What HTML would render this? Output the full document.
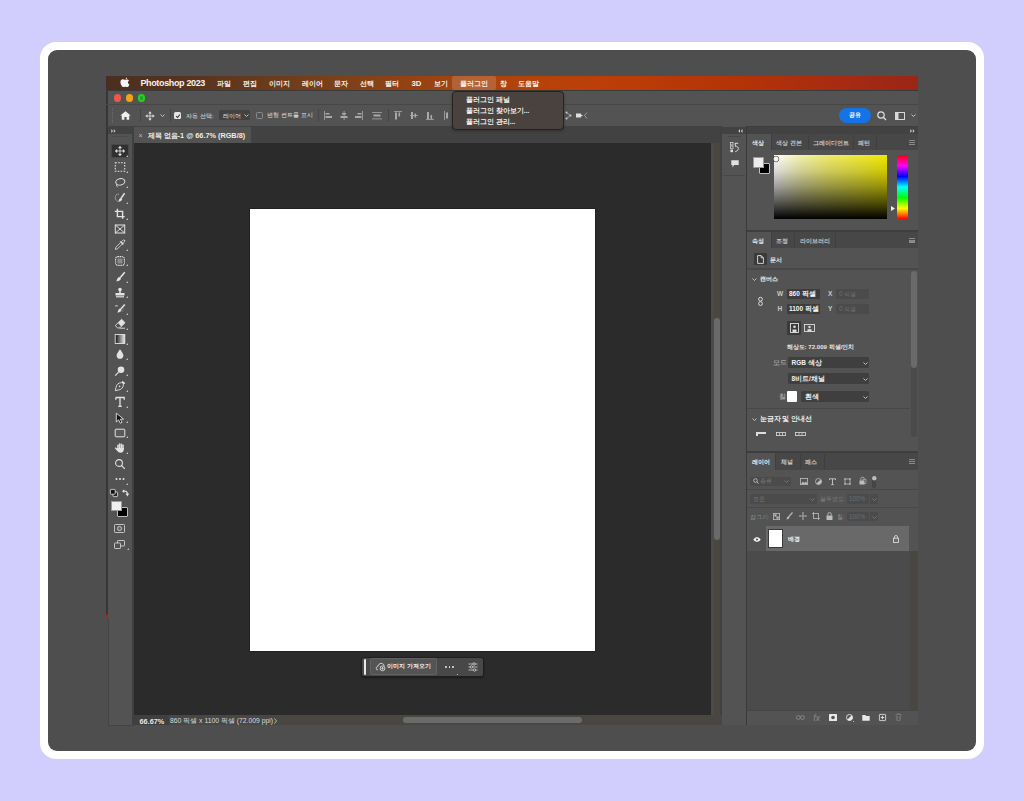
<!DOCTYPE html>
<html><head><meta charset="utf-8">
<style>
*{margin:0;padding:0;box-sizing:border-box}
html,body{width:1024px;height:801px;overflow:hidden;background:#d1cdfc;font-family:"Liberation Sans",sans-serif;color:#e8e8e8}
.a{position:absolute}
.t{position:absolute;white-space:nowrap;line-height:1}
svg{position:absolute;overflow:visible}
</style></head><body>
<div class="a" style="left:40px;top:42px;width:944px;height:717px;background:#fff;border-radius:16px"></div>
<div class="a" style="left:48px;top:50px;width:928px;height:701px;background:#4e4e4e;border-radius:9px"></div>
<div class="a" style="left:106px;top:76px;width:812px;height:649px;background:#535353;"></div>
<div class="a" style="left:106px;top:76px;width:812px;height:14px;background:linear-gradient(to right,#4a2f1f 0%,#56341f 10%,#7a4019 28%,#a8440f 45%,#b84208 55%,#bc3e06 62%,#b23208 80%,#a42a12 92%,#9a2616 100%);"></div>
<div class="a" style="left:106px;top:76px;width:2px;height:14px;background:#4a2836;"></div>
<svg style="left:119.8px;top:77.4px" width="10" height="11" viewBox="0 0 10 11"><g transform="scale(1.12)"><path d="M6.3 0.3c0.1 0.9-0.3 1.7-1.2 2.1-0.1-0.8 0.4-1.7 1.2-2.1z M4.6 2.6c0.6 0 1.1-0.4 1.8-0.4 0.6 0 1.3 0.3 1.7 0.9-1.5 0.8-1.3 2.9 0.3 3.5-0.3 0.9-0.9 2.3-1.8 2.4-0.7 0.1-0.9-0.4-1.8-0.4-0.9 0-1.1 0.4-1.8 0.4C2 9 0.4 6.3 0.4 4.6c0-1.6 1-2.5 2.1-2.5 0.8 0 1.4 0.5 2.1 0.5z" fill="#f4f4f4"/></g></svg>
<div class="t" style="left:140.4px;top:79.24px;font-size:9px;color:#f6f0ec;font-weight:bold;letter-spacing:-0.35px">Photoshop 2023</div>
<div class="a" style="left:452.3px;top:76.3px;width:43.3px;height:13.7px;background:rgba(255,255,255,0.16);border-radius:2px"></div>
<div class="t" style="left:216.6px;top:80.22px;font-size:7px;color:#f8f2ee;font-weight:bold;">파일</div>
<div class="t" style="left:243px;top:80.22px;font-size:7px;color:#f8f2ee;font-weight:bold;">편집</div>
<div class="t" style="left:268.75px;top:80.22px;font-size:7px;color:#f8f2ee;font-weight:bold;">이미지</div>
<div class="t" style="left:301.6px;top:80.22px;font-size:7px;color:#f8f2ee;font-weight:bold;">레이어</div>
<div class="t" style="left:333.8px;top:80.22px;font-size:7px;color:#f8f2ee;font-weight:bold;">문자</div>
<div class="t" style="left:359.8px;top:80.22px;font-size:7px;color:#f8f2ee;font-weight:bold;">선택</div>
<div class="t" style="left:385px;top:80.22px;font-size:7px;color:#f8f2ee;font-weight:bold;">필터</div>
<div class="t" style="left:434.3px;top:80.22px;font-size:7px;color:#f8f2ee;font-weight:bold;">보기</div>
<div class="t" style="left:460px;top:80.22px;font-size:7px;color:#f8f2ee;font-weight:bold;">플러그인</div>
<div class="t" style="left:499.5px;top:80.22px;font-size:7px;color:#f8f2ee;font-weight:bold;">창</div>
<div class="t" style="left:518.3px;top:80.22px;font-size:7px;color:#f8f2ee;font-weight:bold;">도움말</div>
<div class="t" style="left:411.4px;top:79.87px;font-size:7.8px;color:#f8f2ee;font-weight:bold;">3D</div>
<div class="a" style="left:106px;top:90px;width:812px;height:1px;background:#3a3a3a;"></div>
<div class="a" style="left:106px;top:91px;width:2px;height:525px;background:#363636;"></div>
<div class="a" style="left:106.2px;top:613.8px;width:2.2px;height:4.2px;background:#b02414;border-radius:50%"></div>
<div class="a" style="left:106px;top:618px;width:2px;height:107px;background:#4e4e4e;"></div>
<div class="a" style="left:106px;top:104px;width:812px;height:1px;background:#4a4742;"></div>
<div class="a" style="left:113.75px;top:94.0px;width:7.5px;height:7.5px;background:#f0574c;border-radius:50%"></div>
<div class="a" style="left:125.75px;top:94.0px;width:7.5px;height:7.5px;background:#f5a316;border-radius:50%"></div>
<div class="a" style="left:137.75px;top:94.0px;width:7.5px;height:7.5px;background:#20d420;border-radius:50%"></div>
<div class="a" style="left:139.6px;top:95.85px;width:3.8px;height:3.8px;background:#2c9a2c;border-radius:50%"></div>
<div class="a" style="left:112px;top:108px;width:1px;height:1px;background:#6e6e6e;"></div>
<div class="a" style="left:112px;top:110px;width:1px;height:1px;background:#6e6e6e;"></div>
<div class="a" style="left:112px;top:112px;width:1px;height:1px;background:#6e6e6e;"></div>
<div class="a" style="left:112px;top:114px;width:1px;height:1px;background:#6e6e6e;"></div>
<div class="a" style="left:112px;top:116px;width:1px;height:1px;background:#6e6e6e;"></div>
<div class="a" style="left:112px;top:118px;width:1px;height:1px;background:#6e6e6e;"></div>
<div class="a" style="left:112px;top:120px;width:1px;height:1px;background:#6e6e6e;"></div>
<div class="a" style="left:112px;top:122px;width:1px;height:1px;background:#6e6e6e;"></div>
<svg style="left:120px;top:111px" width="11" height="9" viewBox="0 0 11 9"><path d="M5.5 0.3L0.3 4.6h1.5V8.7h2.6V6h2.2v2.7h2.6V4.6h1.5z" fill="#eeeeee"/></svg>
<div class="a" style="left:140.3px;top:108.5px;width:1.0px;height:13.5px;background:#454545;"></div>
<div class="a" style="left:169.6px;top:108.5px;width:1.0px;height:13.5px;background:#454545;"></div>
<div class="a" style="left:317.6px;top:108.5px;width:1.0px;height:13.5px;background:#454545;"></div>
<div class="a" style="left:387.6px;top:108.5px;width:1.0px;height:13.5px;background:#454545;"></div>
<svg style="left:144.5px;top:110.5px" width="10" height="10" viewBox="0 0 10 10"><path d="M5 2v6M2 5h6" stroke="#e8e8e8" stroke-width="0.8"/><path d="M5 0.6L3.7 2.3h2.6zM5 9.4L3.7 7.7h2.6zM0.6 5L2.3 3.7v2.6zM9.4 5L7.7 3.7v2.6z" fill="#e8e8e8" stroke="#e8e8e8" stroke-width="0.4" stroke-linejoin="round"/></svg>
<svg style="left:160px;top:114px" width="5" height="3" viewBox="0 0 5 3"><path d="M0.5 0.5L2.5 2.5L4.5 0.5" stroke="#cfcfcf" stroke-width="0.9" fill="none"/></svg>
<div class="a" style="left:174.4px;top:112px;width:6.9px;height:6.8px;background:#e4e4e4;border-radius:1.5px"></div>
<svg style="left:175px;top:112.5px" width="6" height="6" viewBox="0 0 6 6"><path d="M1.2 3.1L2.6 4.5L4.9 1.5" stroke="#333" stroke-width="1.1" fill="none"/></svg>
<div class="t" style="left:186.4px;top:112.86px;font-size:6px;color:#e0e0e0;font-weight:500;">자동 선택:</div>
<div class="a" style="left:219.4px;top:110px;width:30.6px;height:10.4px;background:#424242;border-radius:1.5px"></div>
<div class="t" style="left:222.5px;top:112.86px;font-size:6px;color:#e0e0e0;font-weight:500;">레이어</div>
<svg style="left:244px;top:114px" width="5" height="3" viewBox="0 0 5 3"><path d="M0.5 0.5L2.5 2.5L4.5 0.5" stroke="#cfcfcf" stroke-width="0.9" fill="none"/></svg>
<div class="a" style="left:255.7px;top:112px;width:7.2px;height:7px;background:transparent;border:1px solid #8a8a8a;border-radius:1.5px"></div>
<div class="t" style="left:267.4px;top:112.9px;font-size:5.9px;color:#e0e0e0;font-weight:500;">변형 컨트롤 표시</div>
<svg style="left:323.9px;top:111px" width="10" height="9" viewBox="0 0 10 9"><rect x="0" y="0" width="0.8" height="9" fill="#a9a9a9"/><rect x="1.5" y="2" width="4" height="1.5" fill="#a9a9a9"/><rect x="1.5" y="5" width="6.5" height="2" fill="#a9a9a9"/></svg>
<svg style="left:340px;top:111px" width="10" height="9" viewBox="0 0 10 9"><rect x="3.7" y="0" width="0.8" height="9" fill="#a9a9a9"/><rect x="2" y="2" width="4" height="1.6" fill="#a9a9a9"/><rect x="0.5" y="5" width="7" height="2" fill="#a9a9a9"/></svg>
<svg style="left:354.7px;top:111px" width="10" height="9" viewBox="0 0 10 9"><rect x="7.2" y="0" width="0.8" height="9" fill="#a9a9a9"/><rect x="2.5" y="2" width="4" height="1.5" fill="#a9a9a9"/><rect x="0" y="5" width="6.5" height="2" fill="#a9a9a9"/></svg>
<svg style="left:372.3px;top:111px" width="10" height="9" viewBox="0 0 10 9"><rect x="0" y="1" width="10" height="0.8" fill="#a9a9a9"/><rect x="1.5" y="3.5" width="7" height="2" fill="#a9a9a9"/><rect x="0" y="7.5" width="10" height="0.8" fill="#a9a9a9"/></svg>
<svg style="left:394.2px;top:111px" width="10" height="9" viewBox="0 0 10 9"><rect x="0" y="0" width="8" height="0.8" fill="#a9a9a9"/><rect x="1" y="1.5" width="2" height="7" fill="#a9a9a9"/><rect x="4.5" y="1.5" width="1.6" height="4" fill="#a9a9a9"/></svg>
<svg style="left:410.3px;top:111px" width="10" height="9" viewBox="0 0 10 9"><rect x="0" y="4" width="8" height="0.8" fill="#a9a9a9"/><rect x="1" y="1" width="2" height="7" fill="#a9a9a9"/><rect x="4.5" y="2.5" width="1.6" height="4" fill="#a9a9a9"/></svg>
<svg style="left:425.7px;top:111px" width="10" height="9" viewBox="0 0 10 9"><rect x="0" y="8.2" width="8" height="0.8" fill="#a9a9a9"/><rect x="1" y="1" width="2" height="7" fill="#a9a9a9"/><rect x="4.5" y="4" width="1.6" height="4" fill="#a9a9a9"/></svg>
<svg style="left:444px;top:111px" width="10" height="9" viewBox="0 0 10 9"><rect x="0" y="0" width="0.8" height="9" fill="#a9a9a9"/><rect x="2" y="1.5" width="2" height="6" fill="#a9a9a9"/></svg>
<svg style="left:565px;top:111px" width="7" height="9" viewBox="0 0 7 9"><g fill="#cfcfcf"><circle cx="1.5" cy="1.5" r="1"/><circle cx="5.5" cy="4.5" r="1"/><circle cx="1.5" cy="7.5" r="1"/></g><path d="M1.5 1.5L5.5 4.5L1.5 7.5" stroke="#cfcfcf" stroke-width="0.6" fill="none"/></svg>
<svg style="left:575.5px;top:112px" width="12" height="7" viewBox="0 0 12 7"><rect x="0" y="1.5" width="5" height="4" fill="#dedede"/><path d="M5 2.5L7 3.5L5 4.5z" fill="#dedede"/><path d="M11 0.5L8.5 3.5L11 6.5" stroke="#bbb" stroke-width="0.7" fill="none"/></svg>
<div class="a" style="left:839.1px;top:107.9px;width:31.5px;height:14.8px;background:#1473e6;border-radius:8px"></div>
<div class="t" style="left:849.2px;top:112.84px;font-size:5.6px;color:#ffffff;font-weight:bold;">공유</div>
<svg style="left:877px;top:111px" width="10" height="10" viewBox="0 0 10 10"><circle cx="4" cy="4" r="3.2" stroke="#e0e0e0" stroke-width="1.2" fill="none"/><path d="M6.3 6.3L9 9" stroke="#e0e0e0" stroke-width="1.3"/></svg>
<svg style="left:895px;top:112px" width="10" height="8" viewBox="0 0 10 8"><rect x="0.5" y="0.5" width="9" height="7" stroke="#d8d8d8" stroke-width="1" fill="none"/><rect x="1" y="1" width="2.5" height="6" fill="#d8d8d8"/></svg>
<svg style="left:911px;top:114px" width="5" height="3" viewBox="0 0 5 3"><path d="M0.5 0.5L2.5 2.5L4.5 0.5" stroke="#cfcfcf" stroke-width="0.9" fill="none"/></svg>
<div class="a" style="left:106px;top:126px;width:812px;height:1px;background:#424242;"></div>
<div class="a" style="left:134px;top:126px;width:588px;height:17.5px;background:#424242;"></div>
<div class="a" style="left:134px;top:127px;width:117px;height:16px;background:#535353;"></div>
<div class="t" style="left:138.5px;top:132.22px;font-size:7px;color:#bdbdbd;font-weight:normal;">×</div>
<div class="t" style="left:147.6px;top:132.09px;font-size:7.3px;color:#ececec;font-weight:bold;">제목 없음-1 @ 66.7% (RGB/8)</div>
<div class="a" style="left:108px;top:127px;width:24px;height:598px;background:#535353;"></div>
<div class="a" style="left:108px;top:127px;width:24px;height:7px;background:#424242;"></div>
<svg style="left:110.5px;top:128.5px" width="5" height="4" viewBox="0 0 5 4"><path d="M0.3 0L2 2 0.3 4zM2.8 0L4.5 2 2.8 4z" fill="#c8c8c8"/></svg>
<div class="a" style="left:113px;top:136px;width:14px;height:1px;background:#4a4a4a;"></div>
<div class="a" style="left:132px;top:127px;width:2px;height:598px;background:#404040;"></div>
<div class="a" style="left:108px;top:618px;width:0.8px;height:107px;background:#454545;"></div>
<div class="a" style="left:108px;top:725px;width:26px;height:1px;background:#434343;"></div>
<div class="a" style="left:111.2px;top:144.3px;width:18.0px;height:13.7px;background:#303030;border-radius:2px;border:0.6px solid #474747"></div>
<svg style="left:114px;top:145.2px" width="12" height="12" viewBox="0 0 12 12"><path d="M6 2.5v7M2.5 6h7" stroke="#e2e2e2" stroke-width="0.8"/><path d="M6 1.1L4.5 3h3zM6 10.9L4.5 9h3zM1.1 6L3 4.5v3zM10.9 6L9 4.5v3z" fill="#e2e2e2" stroke="#e2e2e2" stroke-width="0.5" stroke-linejoin="round"/></svg>
<svg style="left:126px;top:155.0px" width="2" height="2" viewBox="0 0 2 2"><path d="M2 0V2H0z" fill="#bdbdbd"/></svg>
<svg style="left:114px;top:160.9px" width="12" height="12" viewBox="0 0 12 12"><rect x="1.3" y="1.8" width="9.4" height="8.4" stroke="#e2e2e2" stroke-width="1.1" stroke-dasharray="1.6 1.3" fill="none"/></svg>
<svg style="left:126px;top:170.7px" width="2" height="2" viewBox="0 0 2 2"><path d="M2 0V2H0z" fill="#bdbdbd"/></svg>
<svg style="left:114px;top:176.5px" width="12" height="12" viewBox="0 0 12 12"><ellipse cx="6.3" cy="4.8" rx="4.6" ry="3.2" transform="rotate(-12 6.3 4.8)" stroke="#e2e2e2" stroke-width="1" fill="none"/><path d="M2.8 7.2c-0.8 1.3 0.2 2.3 0.8 2.8" stroke="#e2e2e2" stroke-width="0.9" fill="none"/></svg>
<svg style="left:126px;top:186.3px" width="2" height="2" viewBox="0 0 2 2"><path d="M2 0V2H0z" fill="#bdbdbd"/></svg>
<svg style="left:114px;top:192px" width="12" height="12" viewBox="0 0 12 12"><path d="M4.8 2.2C2.5 1.8 1.2 3.5 1.3 5.7c0.1 2 1.4 3.7 3.1 4" stroke="#e2e2e2" stroke-width="0.8" stroke-dasharray="1 0.8" fill="none"/><path d="M10.6 1.3L7.2 6.1" stroke="#e2e2e2" stroke-width="1.5"/><path d="M7 5.8c-1.6 0.6-2.2 2-2.6 4 1.9-0.3 3.4-1 3.9-2.8z" fill="#e2e2e2"/></svg>
<svg style="left:126px;top:201.8px" width="2" height="2" viewBox="0 0 2 2"><path d="M2 0V2H0z" fill="#bdbdbd"/></svg>
<svg style="left:114px;top:207.75px" width="12" height="12" viewBox="0 0 12 12"><path d="M3.4 0.8v7.8h7.2M0.8 3.4h7.8v7.4" stroke="#e2e2e2" stroke-width="1.4" fill="none"/></svg>
<svg style="left:126px;top:217.55px" width="2" height="2" viewBox="0 0 2 2"><path d="M2 0V2H0z" fill="#bdbdbd"/></svg>
<svg style="left:114px;top:223.4px" width="12" height="12" viewBox="0 0 12 12"><rect x="1.3" y="2" width="9.4" height="8" stroke="#e2e2e2" stroke-width="1" fill="none"/><path d="M1.3 2L10.7 10M10.7 2L1.3 10" stroke="#e2e2e2" stroke-width="0.9"/></svg>
<svg style="left:114px;top:239px" width="12" height="12" viewBox="0 0 12 12"><path d="M10.6 1.4c-0.6-0.6-1.5-0.5-2 0.1L7.4 2.7 6.8 2.1 5.9 3l0.6 0.6-4.6 4.6-0.6 2.2 2.2-0.6 4.6-4.6 0.6 0.6 0.9-0.9-0.6-0.6 1.2-1.2c0.6-0.5 0.7-1.4 0.4-2.1z" stroke="#e2e2e2" stroke-width="0.8" fill="none"/><path d="M6.5 3.6L8.4 5.5 9.5 4.4 7.6 2.5z" fill="#e2e2e2"/></svg>
<svg style="left:126px;top:248.8px" width="2" height="2" viewBox="0 0 2 2"><path d="M2 0V2H0z" fill="#bdbdbd"/></svg>
<svg style="left:114px;top:254.6px" width="12" height="12" viewBox="0 0 12 12"><rect x="1.6" y="1.6" width="8.8" height="8.8" rx="2.4" stroke="#e2e2e2" stroke-width="1.1" stroke-dasharray="1.2 0.6" fill="none"/><rect x="3.5" y="3.5" width="5" height="5" fill="#8a8a8a"/></svg>
<svg style="left:126px;top:264.4px" width="2" height="2" viewBox="0 0 2 2"><path d="M2 0V2H0z" fill="#bdbdbd"/></svg>
<svg style="left:114px;top:270.9px" width="12" height="12" viewBox="0 0 12 12"><path d="M10.8 1.2L6.3 6.4" stroke="#e2e2e2" stroke-width="1.6"/><path d="M5.8 6C4 6.2 3 7.4 2.4 10.6 5 10 6.8 9 7 7.2z" fill="#e2e2e2"/></svg>
<svg style="left:126px;top:280.7px" width="2" height="2" viewBox="0 0 2 2"><path d="M2 0V2H0z" fill="#bdbdbd"/></svg>
<svg style="left:114px;top:286.5px" width="12" height="12" viewBox="0 0 12 12"><circle cx="6" cy="2.6" r="1.8" fill="#e2e2e2"/><path d="M5.2 3.8h1.6v2.2h3.7v2.4H1.5V6h3.7z" fill="#e2e2e2"/><rect x="2" y="9.2" width="8" height="1.2" fill="#e2e2e2"/></svg>
<svg style="left:126px;top:296.3px" width="2" height="2" viewBox="0 0 2 2"><path d="M2 0V2H0z" fill="#bdbdbd"/></svg>
<svg style="left:114px;top:302.75px" width="12" height="12" viewBox="0 0 12 12"><path d="M10.8 1.4L6.8 6" stroke="#e2e2e2" stroke-width="1.5"/><path d="M6.4 5.6C4.8 5.8 4 7 3.5 9.8c2.3-0.5 3.9-1.4 4.1-3z" fill="#e2e2e2"/><path d="M1 3.4c0.8-0.8 2-0.9 2.8-0.3" stroke="#e2e2e2" stroke-width="1" fill="none"/><path d="M9.8 5.2L8 9.5" stroke="#9a9a9a" stroke-width="0.7" stroke-dasharray="0.8 0.8"/></svg>
<svg style="left:126px;top:312.55px" width="2" height="2" viewBox="0 0 2 2"><path d="M2 0V2H0z" fill="#bdbdbd"/></svg>
<svg style="left:114px;top:317.75px" width="12" height="12" viewBox="0 0 12 12"><path d="M7.6 1.3L11 4.7 5.8 9.9H3.6L1.2 7.6z" stroke="#e2e2e2" stroke-width="0.9" fill="none"/><path d="M7.6 1.3L11 4.7 7.3 8.4 4 5z" fill="#e2e2e2"/><path d="M5.5 10.2h5.5" stroke="#e2e2e2" stroke-width="0.9"/></svg>
<svg style="left:126px;top:327.55px" width="2" height="2" viewBox="0 0 2 2"><path d="M2 0V2H0z" fill="#bdbdbd"/></svg>
<svg style="left:114px;top:332.75px" width="12" height="12" viewBox="0 0 12 12"><defs><linearGradient id="gg" x1="0" x2="1"><stop offset="0" stop-color="#111"/><stop offset="1" stop-color="#eee"/></linearGradient></defs><rect x="1.2" y="1.5" width="9.6" height="9" fill="url(#gg)" stroke="#e2e2e2" stroke-width="0.9"/></svg>
<svg style="left:126px;top:342.55px" width="2" height="2" viewBox="0 0 2 2"><path d="M2 0V2H0z" fill="#bdbdbd"/></svg>
<svg style="left:114px;top:348.4px" width="12" height="12" viewBox="0 0 12 12"><path d="M6 1.2C4.6 3.3 2.6 5.4 2.6 7.4c0 2 1.5 3.4 3.4 3.4s3.4-1.4 3.4-3.4C9.4 5.4 7.4 3.3 6 1.2z" fill="#e2e2e2"/></svg>
<svg style="left:126px;top:358.2px" width="2" height="2" viewBox="0 0 2 2"><path d="M2 0V2H0z" fill="#bdbdbd"/></svg>
<svg style="left:114px;top:364.6px" width="12" height="12" viewBox="0 0 12 12"><circle cx="7" cy="4.8" r="3.3" fill="#e2e2e2"/><path d="M4.6 7.2L1.2 10.6" stroke="#e2e2e2" stroke-width="1.2"/></svg>
<svg style="left:126px;top:374.4px" width="2" height="2" viewBox="0 0 2 2"><path d="M2 0V2H0z" fill="#bdbdbd"/></svg>
<svg style="left:114px;top:380.25px" width="12" height="12" viewBox="0 0 12 12"><path d="M8.8 1.3L10.7 3.2 9.3 4.6c0 2.8-1.6 4.8-4.4 5.3L1.3 10.7 2.1 7.1C2.6 4.3 4.6 2.7 7.4 2.7z" stroke="#e2e2e2" stroke-width="0.9" fill="none"/><path d="M8.8 1.3L10.7 3.2 9.5 4.4 7.6 2.5z" fill="#e2e2e2"/><circle cx="5.6" cy="6.4" r="0.8" fill="#e2e2e2"/></svg>
<svg style="left:126px;top:390.05px" width="2" height="2" viewBox="0 0 2 2"><path d="M2 0V2H0z" fill="#bdbdbd"/></svg>
<svg style="left:114px;top:396px" width="12" height="12" viewBox="0 0 12 12"><path d="M1.8 1.5h8.4v2.2M1.8 1.5v2.2M6 1.5v8.8M4.2 10.3h3.6" stroke="#e2e2e2" stroke-width="1.3" fill="none"/></svg>
<svg style="left:126px;top:405.8px" width="2" height="2" viewBox="0 0 2 2"><path d="M2 0V2H0z" fill="#bdbdbd"/></svg>
<svg style="left:114px;top:411.5px" width="12" height="12" viewBox="0 0 12 12"><path d="M2.3 1.2L2.3 10 4.6 7.8 6.2 11.2 8 10.4 6.4 7.1h3.2z" fill="#111" stroke="#e2e2e2" stroke-width="0.9"/></svg>
<svg style="left:126px;top:421.3px" width="2" height="2" viewBox="0 0 2 2"><path d="M2 0V2H0z" fill="#bdbdbd"/></svg>
<svg style="left:114px;top:426.5px" width="12" height="12" viewBox="0 0 12 12"><rect x="1.2" y="2.2" width="9.6" height="7.6" rx="0.8" stroke="#e2e2e2" stroke-width="1" fill="#5a5a5a"/></svg>
<svg style="left:126px;top:436.3px" width="2" height="2" viewBox="0 0 2 2"><path d="M2 0V2H0z" fill="#bdbdbd"/></svg>
<svg style="left:114px;top:442px" width="12" height="12" viewBox="0 0 12 12"><rect x="3.2" y="2.4" width="1.5" height="5" rx="0.75" fill="#e2e2e2"/><rect x="4.9" y="1.2" width="1.5" height="6" rx="0.75" fill="#e2e2e2"/><rect x="6.6" y="1.6" width="1.5" height="6" rx="0.75" fill="#e2e2e2"/><rect x="8.3" y="2.6" width="1.5" height="5" rx="0.75" fill="#e2e2e2"/><path d="M3.2 6h6.6v1.5c0 2-1.4 3.3-3.3 3.3-1.6 0-2.6-0.8-3.4-2L1 6.4c-0.4-0.6 0.4-1.3 1-0.8L3.2 6.8z" fill="#e2e2e2"/></svg>
<svg style="left:126px;top:451.8px" width="2" height="2" viewBox="0 0 2 2"><path d="M2 0V2H0z" fill="#bdbdbd"/></svg>
<svg style="left:114px;top:457.75px" width="12" height="12" viewBox="0 0 12 12"><circle cx="5" cy="5" r="3.4" stroke="#e2e2e2" stroke-width="1.1" fill="none"/><path d="M7.4 7.4L10.8 10.8" stroke="#e2e2e2" stroke-width="1.2"/></svg>
<svg style="left:114px;top:473.4px" width="12" height="12" viewBox="0 0 12 12"><circle cx="2.5" cy="6" r="1" fill="#e2e2e2"/><circle cx="6" cy="6" r="1" fill="#e2e2e2"/><circle cx="9.5" cy="6" r="1" fill="#e2e2e2"/></svg>
<svg style="left:126px;top:483.2px" width="2" height="2" viewBox="0 0 2 2"><path d="M2 0V2H0z" fill="#bdbdbd"/></svg>
<svg style="left:110px;top:488.5px" width="8" height="8" viewBox="0 0 8 8"><rect x="3" y="3" width="4.6" height="4.6" rx="0.6" fill="#222" stroke="#e2e2e2" stroke-width="0.8"/><rect x="0.4" y="0.4" width="4.8" height="4.8" rx="0.6" fill="#111" stroke="#e2e2e2" stroke-width="0.8"/></svg>
<svg style="left:121.5px;top:488.5px" width="7" height="8" viewBox="0 0 7 8"><path d="M1.6 2.2c2.2-0.6 3.8 0.6 3.8 3" stroke="#e2e2e2" stroke-width="1.2" fill="none"/><path d="M0 2.2L2.2 0.3V4z M3.6 4.6h3.6L5.4 7.4z" fill="#e2e2e2"/></svg>
<div class="a" style="left:117px;top:506.9px;width:11.4px;height:10.6px;background:#000;border:0.8px solid #bcbcbc;border-radius:1px"></div>
<div class="a" style="left:111.2px;top:501px;width:11.3px;height:10.3px;background:#eeeeee;border:0.6px solid #9a9a9a"></div>
<svg style="left:114.2px;top:524px" width="11" height="9" viewBox="0 0 11 9"><rect x="0.5" y="0.5" width="10" height="8" rx="0.8" stroke="#cfcfcf" stroke-width="0.9" fill="none"/><circle cx="5.5" cy="4.5" r="2.1" stroke="#cfcfcf" stroke-width="0.9" fill="#6a6a6a"/></svg>
<svg style="left:114px;top:540px" width="11" height="9" viewBox="0 0 11 9"><rect x="3.5" y="0.5" width="7" height="5.5" rx="0.6" stroke="#cfcfcf" stroke-width="0.9" fill="none"/><rect x="0.5" y="3" width="6" height="5.5" rx="0.6" stroke="#cfcfcf" stroke-width="0.9" fill="#535353"/></svg>
<svg style="left:126.5px;top:548.3px" width="2" height="2" viewBox="0 0 2 2"><path d="M2 0V2H0z" fill="#bdbdbd"/></svg>
<div class="a" style="left:134px;top:143px;width:577px;height:572px;background:#2b2b2b;"></div>
<div class="a" style="left:249px;top:208px;width:347px;height:443.5px;background:#212121;"></div>
<div class="a" style="left:250px;top:209px;width:345px;height:441.7px;background:#ffffff;"></div>
<div class="a" style="left:711px;top:143px;width:11px;height:572px;background:#4b4b4b;"></div>
<div class="a" style="left:713.5px;top:143px;width:6.5px;height:572px;background:#4a4640;"></div>
<div class="a" style="left:720px;top:127px;width:2.5px;height:598px;background:#404040;"></div>
<div class="a" style="left:714px;top:318.4px;width:6px;height:222.0px;background:#6a6a6a;border-radius:3px"></div>
<div class="a" style="left:134px;top:715px;width:588px;height:10px;background:#4a4742;"></div>
<div class="a" style="left:134px;top:715px;width:34.8px;height:10px;background:#3f3f3f;"></div>
<div class="a" style="left:168.8px;top:715px;width:111.2px;height:10px;background:#474747;"></div>
<div class="t" style="left:139.5px;top:717.79px;font-size:7.3px;color:#e8e8e8;font-weight:bold;">66.67%</div>
<div class="t" style="left:170px;top:718.01px;font-size:6.8px;color:#dadada;font-weight:500;">860 픽셀 x 1100 픽셀 (72.009 ppi)</div>
<svg style="left:273.5px;top:717.5px" width="3" height="6" viewBox="0 0 3 6"><path d="M0.5 0.5L2.5 3L0.5 5.5" stroke="#cfcfcf" stroke-width="0.8" fill="none"/></svg>
<div class="a" style="left:403px;top:717.2px;width:179.2px;height:6.3px;background:#6b6b6b;border-radius:3px"></div>
<div class="a" style="left:722px;top:126px;width:24px;height:599px;background:#535353;"></div>
<div class="a" style="left:722px;top:127px;width:24px;height:7px;background:#424242;"></div>
<svg style="left:737.5px;top:128.5px" width="5" height="4" viewBox="0 0 5 4"><path d="M4.5 0L2.8 2 4.5 4zM2 0L0.3 2 2 4z" fill="#c8c8c8"/></svg>
<div class="a" style="left:723px;top:134px;width:22.3px;height:41px;background:#535353;"></div>
<div class="a" style="left:728px;top:136px;width:13px;height:1px;background:#474747;"></div>
<div class="a" style="left:746px;top:126px;width:1px;height:599px;background:#3a3a3a;"></div>
<div class="a" style="left:747px;top:126px;width:171px;height:599px;background:#3e3e3e;"></div>
<div class="a" style="left:747px;top:127px;width:171px;height:7px;background:#424242;"></div>
<svg style="left:909.5px;top:128.5px" width="5" height="4" viewBox="0 0 5 4"><path d="M0.3 0L2 2 0.3 4zM2.8 0L4.5 2 2.8 4z" fill="#c8c8c8"/></svg>
<div class="a" style="left:747px;top:134px;width:171px;height:16.3px;background:#474747;"></div>
<div class="a" style="left:747px;top:134px;width:23.7px;height:16.3px;background:#535353;"></div>
<div class="a" style="left:807.75px;top:135px;width:1.0px;height:15.3px;background:#3f3f3f;"></div>
<div class="a" style="left:852.9px;top:135px;width:1.0px;height:15.3px;background:#3f3f3f;"></div>
<div class="a" style="left:876.4px;top:135px;width:1.0px;height:15.3px;background:#3f3f3f;"></div>
<div class="a" style="left:770.7px;top:134px;width:0.8px;height:16.3px;background:#3f3f3f;"></div>
<div class="t" style="left:752px;top:139.73px;font-size:6.3px;color:#f0f0f0;font-weight:bold;">색상</div>
<div class="t" style="left:776px;top:139.77px;font-size:6.2px;color:#c4c4c4;font-weight:bold;">색상 견본</div>
<div class="t" style="left:812.8px;top:139.77px;font-size:6.2px;color:#c4c4c4;font-weight:bold;">그레이디언트</div>
<div class="t" style="left:858px;top:139.77px;font-size:6.2px;color:#c4c4c4;font-weight:bold;">패턴</div>
<div class="a" style="left:909.0px;top:139.75px;width:6.0px;height:1.3px;background:#8a8a8a;"></div>
<div class="a" style="left:909.0px;top:141.65px;width:6.0px;height:1.3px;background:#8a8a8a;"></div>
<div class="a" style="left:909.0px;top:143.55px;width:6.0px;height:1.3px;background:#8a8a8a;"></div>
<div class="a" style="left:747px;top:150.3px;width:171px;height:79.5px;background:#535353;"></div>
<div class="a" style="left:759.4px;top:163px;width:10.6px;height:11.4px;background:#000;border:0.8px solid #c0c0c0;border-radius:1px"></div>
<div class="a" style="left:753px;top:156.9px;width:11.4px;height:11.1px;background:#ececec;border:0.6px solid #999"></div>
<div class="a" style="left:774.3px;top:154.8px;width:112.4px;height:64.2px;background:linear-gradient(to bottom,rgba(0,0,0,0) 0%,rgba(0,0,0,0.14) 25%,rgba(0,0,0,0.38) 50%,rgba(0,0,0,0.67) 75%,#000 100%),linear-gradient(to right,#fff 0%,#f2f0a8 25%,#efeb66 50%,#efe938 75%,#f0e800 100%);"></div>
<svg style="left:773.2px;top:156.2px" width="6" height="6" viewBox="0 0 6 6"><circle cx="3" cy="3" r="2.8" stroke="#333" stroke-width="0.8" fill="none"/><circle cx="3" cy="3" r="2.1" stroke="#f0f0f0" stroke-width="0.8" fill="none"/></svg>
<div class="a" style="left:896.8px;top:155px;width:11.6px;height:64px;background:linear-gradient(to bottom,#ff0000 0%,#ff00ff 16.7%,#0000ff 33.3%,#00ffff 50%,#00ff00 66.7%,#ffff00 83.3%,#ff0000 100%);"></div>
<svg style="left:891px;top:205.5px" width="4" height="5" viewBox="0 0 4 5"><path d="M0 0L4 2.5L0 5z" fill="#f0f0f0"/></svg>
<div class="a" style="left:747px;top:229.8px;width:171px;height:1.8px;background:#3e3e3e;"></div>
<div class="a" style="left:747px;top:231.6px;width:171px;height:16.7px;background:#474747;"></div>
<div class="a" style="left:747px;top:231.6px;width:23.7px;height:16.7px;background:#535353;"></div>
<div class="a" style="left:794.2px;top:232.5px;width:0.8px;height:15.8px;background:#3f3f3f;"></div>
<div class="a" style="left:834.85px;top:232.5px;width:0.75px;height:15.8px;background:#3f3f3f;"></div>
<div class="a" style="left:770.7px;top:232.5px;width:0.8px;height:15.8px;background:#3f3f3f;"></div>
<div class="t" style="left:752px;top:237.63px;font-size:6.3px;color:#f0f0f0;font-weight:bold;">속성</div>
<div class="t" style="left:776px;top:237.67px;font-size:6.2px;color:#c4c4c4;font-weight:bold;">조정</div>
<div class="t" style="left:799.5px;top:237.67px;font-size:6.2px;color:#c4c4c4;font-weight:bold;">라이브러리</div>
<div class="a" style="left:909.0px;top:237.64999999999998px;width:6.0px;height:1.3px;background:#8a8a8a;"></div>
<div class="a" style="left:909.0px;top:239.54999999999998px;width:6.0px;height:1.3px;background:#8a8a8a;"></div>
<div class="a" style="left:909.0px;top:241.45px;width:6.0px;height:1.3px;background:#8a8a8a;"></div>
<div class="a" style="left:747px;top:248.3px;width:171px;height:202.9px;background:#535353;"></div>
<div class="a" style="left:754px;top:252.6px;width:12.7px;height:12.4px;background:#3a3a3a;border-radius:1px"></div>
<svg style="left:757px;top:254.5px" width="7" height="9" viewBox="0 0 7 9"><path d="M0.6 0.6h3.6l2.2 2.2v5.6H0.6z M4.2 0.6v2.2h2.2" stroke="#e0e0e0" stroke-width="0.9" fill="none"/></svg>
<div class="t" style="left:769.8px;top:256.93px;font-size:6.3px;color:#e6e6e6;font-weight:bold;">문서</div>
<div class="a" style="left:747px;top:268px;width:171px;height:2px;background:#484848;"></div>
<svg style="left:751.5px;top:277.5px" width="5" height="3" viewBox="0 0 5 3"><path d="M0.5 0.5L2.5 2.5L4.5 0.5" stroke="#cfcfcf" stroke-width="0.9" fill="none"/></svg>
<div class="t" style="left:759.5px;top:276.36px;font-size:6px;color:#f0f0f0;font-weight:bold;">캔버스</div>
<div class="a" style="left:910.7px;top:270.7px;width:6.0px;height:165.9px;background:#4a4a4a;border-radius:3px"></div>
<div class="a" style="left:910.7px;top:270.7px;width:6.0px;height:97.3px;background:#6a6a6a;border-radius:3px"></div>
<div class="t" style="left:777px;top:291.14px;font-size:6.5px;color:#c8c8c8;font-weight:bold;">W</div>
<div class="a" style="left:786.6px;top:289.1px;width:33.4px;height:9.6px;background:#3d3d3d;border-radius:1px"></div>
<div class="t" style="left:789px;top:291.14px;font-size:6.5px;color:#f4f4f4;font-weight:bold;">860 픽셀</div>
<div class="t" style="left:828px;top:291.14px;font-size:6.5px;color:#c8c8c8;font-weight:bold;">X</div>
<div class="a" style="left:836.3px;top:289.1px;width:32.9px;height:9.6px;background:#4b4b4b;border-radius:1px"></div>
<div class="t" style="left:839px;top:291.23px;font-size:6.3px;color:#6e6e6e;font-weight:normal;">0 픽셀</div>
<div class="t" style="left:777.5px;top:305.94px;font-size:6.5px;color:#c8c8c8;font-weight:bold;">H</div>
<div class="a" style="left:786.6px;top:304px;width:33.4px;height:9.7px;background:#3d3d3d;border-radius:1px"></div>
<div class="t" style="left:789px;top:305.94px;font-size:6.5px;color:#f4f4f4;font-weight:bold;">1100 픽셀</div>
<div class="t" style="left:828px;top:305.94px;font-size:6.5px;color:#c8c8c8;font-weight:bold;">Y</div>
<div class="a" style="left:836.3px;top:304px;width:32.9px;height:9.7px;background:#4b4b4b;border-radius:1px"></div>
<div class="t" style="left:839px;top:306.03px;font-size:6.3px;color:#6e6e6e;font-weight:normal;">0 픽셀</div>
<svg style="left:758.3px;top:297px" width="5" height="10" viewBox="0 0 5 10"><circle cx="2.5" cy="2.2" r="1.9" stroke="#dcdcdc" stroke-width="1" fill="none"/><circle cx="2.5" cy="6.6" r="1.9" stroke="#dcdcdc" stroke-width="1" fill="none"/></svg>
<div class="a" style="left:787.3px;top:321.3px;width:13.6px;height:13.55px;background:#3a3a3a;border-radius:1px"></div>
<svg style="left:789.5px;top:323.2px" width="9" height="10" viewBox="0 0 9 10"><rect x="0.5" y="0.5" width="8" height="9" stroke="#ddd" stroke-width="0.9" fill="none"/><circle cx="4.5" cy="3.8" r="1.3" fill="#ddd"/><path d="M2.5 9.5V6.5h4v3z" fill="#ddd"/></svg>
<svg style="left:804px;top:324px" width="11" height="8" viewBox="0 0 11 8"><rect x="0.5" y="0.5" width="10" height="7" stroke="#ddd" stroke-width="0.9" fill="none"/><circle cx="5.5" cy="3" r="1.2" fill="#ddd"/><path d="M3.5 7.5V5.2h4v2.3z" fill="#ddd"/></svg>
<div class="t" style="left:786.6px;top:343.82px;font-size:6.1px;color:#e6e6e6;font-weight:bold;">해상도: 72.009 픽셀/인치</div>
<div class="t" style="left:772.5px;top:359.84px;font-size:6.5px;color:#c8c8c8;font-weight:normal;">모드</div>
<div class="a" style="left:787.9px;top:357.1px;width:81.3px;height:10.8px;background:#3f3f3f;border-radius:1.5px"></div>
<div class="t" style="left:791.5px;top:360.04px;font-size:6.5px;color:#f0f0f0;font-weight:bold;">RGB 색상</div>
<svg style="left:863px;top:361.5px" width="5" height="3" viewBox="0 0 5 3"><path d="M0.5 0.5L2.5 2.5L4.5 0.5" stroke="#cfcfcf" stroke-width="0.9" fill="none"/></svg>
<div class="a" style="left:787.9px;top:373.4px;width:81.3px;height:10.3px;background:#3f3f3f;border-radius:1.5px"></div>
<div class="t" style="left:791.5px;top:376.04px;font-size:6.5px;color:#f0f0f0;font-weight:bold;">8비트/채널</div>
<svg style="left:863px;top:377.5px" width="5" height="3" viewBox="0 0 5 3"><path d="M0.5 0.5L2.5 2.5L4.5 0.5" stroke="#cfcfcf" stroke-width="0.9" fill="none"/></svg>
<div class="t" style="left:779px;top:393.94px;font-size:6.5px;color:#c8c8c8;font-weight:normal;">칠</div>
<div class="a" style="left:787.3px;top:391.4px;width:10.0px;height:10.5px;background:#ffffff;border-radius:1px"></div>
<div class="a" style="left:801px;top:391.4px;width:68.2px;height:10.5px;background:#3f3f3f;border-radius:1.5px"></div>
<div class="t" style="left:805px;top:394.14px;font-size:6.5px;color:#f0f0f0;font-weight:bold;">흰색</div>
<svg style="left:863px;top:395.6px" width="5" height="3" viewBox="0 0 5 3"><path d="M0.5 0.5L2.5 2.5L4.5 0.5" stroke="#cfcfcf" stroke-width="0.9" fill="none"/></svg>
<div class="a" style="left:747px;top:408.2px;width:163px;height:1.0px;background:#484848;"></div>
<svg style="left:751.5px;top:417.6px" width="5" height="3" viewBox="0 0 5 3"><path d="M0.5 0.5L2.5 2.5L4.5 0.5" stroke="#cfcfcf" stroke-width="0.9" fill="none"/></svg>
<div class="t" style="left:759.5px;top:416.14px;font-size:6.5px;color:#f0f0f0;font-weight:bold;">눈금자 및 안내선</div>
<svg style="left:756px;top:432px" width="10" height="4" viewBox="0 0 10 4"><rect x="0" y="0" width="10" height="2" fill="#ddd"/><rect x="0" y="0" width="2" height="4" fill="#ddd"/></svg>
<svg style="left:776px;top:432px" width="10" height="4" viewBox="0 0 10 4"><rect x="0.4" y="0.4" width="9.2" height="3.2" stroke="#ddd" stroke-width="0.8" fill="none"/><path d="M3.5 0.4v3.2M6.5 0.4v3.2" stroke="#ddd" stroke-width="0.7"/></svg>
<svg style="left:795px;top:432px" width="11" height="4" viewBox="0 0 11 4"><rect x="0.4" y="0.4" width="10" height="3.2" stroke="#ddd" stroke-width="0.8" fill="none"/><path d="M3.5 3.6L4.5 0.4M6.5 3.6L7.5 0.4" stroke="#ddd" stroke-width="0.7"/></svg>
<div class="a" style="left:747px;top:451.2px;width:171px;height:1.8px;background:#3e3e3e;"></div>
<div class="a" style="left:747px;top:453px;width:171px;height:16.8px;background:#474747;"></div>
<div class="a" style="left:747px;top:453px;width:28.2px;height:16.8px;background:#535353;"></div>
<div class="a" style="left:775.2px;top:454px;width:0.8px;height:15.8px;background:#3f3f3f;"></div>
<div class="a" style="left:799.6px;top:454px;width:0.8px;height:15.8px;background:#3f3f3f;"></div>
<div class="a" style="left:823.5px;top:454px;width:0.8px;height:15.8px;background:#3f3f3f;"></div>
<div class="t" style="left:752px;top:459.23px;font-size:6.3px;color:#f0f0f0;font-weight:bold;">레이어</div>
<div class="t" style="left:781px;top:459.27px;font-size:6.2px;color:#c4c4c4;font-weight:bold;">채널</div>
<div class="t" style="left:805px;top:459.27px;font-size:6.2px;color:#c4c4c4;font-weight:bold;">패스</div>
<div class="a" style="left:909.0px;top:459.05000000000007px;width:6.0px;height:1.3px;background:#8a8a8a;"></div>
<div class="a" style="left:909.0px;top:460.95000000000005px;width:6.0px;height:1.3px;background:#8a8a8a;"></div>
<div class="a" style="left:909.0px;top:462.85px;width:6.0px;height:1.3px;background:#8a8a8a;"></div>
<div class="a" style="left:747px;top:469.8px;width:171px;height:56.0px;background:#535353;"></div>
<div class="a" style="left:750px;top:476.5px;width:41px;height:9.0px;background:#4b4b4b;border-radius:1px"></div>
<svg style="left:752.5px;top:478px" width="6" height="6" viewBox="0 0 6 6"><circle cx="2.5" cy="2.5" r="1.8" stroke="#bbb" stroke-width="0.9" fill="none"/><path d="M3.8 3.8L5.6 5.6" stroke="#bbb" stroke-width="1"/></svg>
<div class="t" style="left:759.5px;top:478.36px;font-size:6px;color:#7a7a7a;font-weight:normal;">종류</div>
<svg style="left:783.5px;top:480px" width="5" height="3" viewBox="0 0 5 3"><path d="M0.5 0.5L2.5 2.5L4.5 0.5" stroke="#7a7a7a" stroke-width="0.9" fill="none"/></svg>
<svg style="left:799.5px;top:477.5px" width="8" height="7" viewBox="0 0 8 7"><rect x="0.4" y="0.4" width="7.2" height="6.2" stroke="#bdbdbd" stroke-width="0.8" fill="none"/><path d="M1 6l2-2.5 1.5 1.5 1.5-1.5 1.5 2.5z" fill="#bdbdbd"/></svg>
<svg style="left:815px;top:477.5px" width="7" height="7" viewBox="0 0 7 7"><circle cx="3.5" cy="3.5" r="3" stroke="#bdbdbd" stroke-width="0.8" fill="none"/><path d="M3.5 0.5A3 3 0 0 1 3.5 6.5z" fill="#bdbdbd" transform="rotate(45 3.5 3.5)"/></svg>
<svg style="left:829.3px;top:477.5px" width="7" height="7" viewBox="0 0 7 7"><path d="M0.5 0.8h6M3.5 0.8v6M2.2 6.6h2.6M0.5 0.8v1.2M6.5 0.8v1.2" stroke="#bdbdbd" stroke-width="1" fill="none"/></svg>
<svg style="left:843.5px;top:477.5px" width="7" height="7" viewBox="0 0 7 7"><rect x="1" y="1" width="5" height="5" stroke="#bdbdbd" stroke-width="0.8" fill="none"/><path d="M0 1h2M1 0v2M5 1h2M6 0v2M0 6h2M1 5v2M5 6h2M6 5v2" stroke="#bdbdbd" stroke-width="0.6"/></svg>
<svg style="left:858.5px;top:477px" width="7" height="8" viewBox="0 0 7 8"><rect x="0.5" y="3.5" width="5" height="4" fill="#bdbdbd"/><path d="M1.8 3.5V2a1.8 1.8 0 0 1 3.6 0" stroke="#bdbdbd" stroke-width="0.8" fill="none"/><rect x="4" y="2.5" width="3" height="4" stroke="#bdbdbd" stroke-width="0.6" fill="none"/></svg>
<div class="a" style="left:871.5px;top:479px;width:4.5px;height:9px;background:#444;border-radius:2px"></div>
<svg style="left:871.5px;top:476px" width="5" height="5" viewBox="0 0 5 5"><circle cx="2.3" cy="2.3" r="2.2" fill="#bdbdbd"/></svg>
<div class="a" style="left:747px;top:489px;width:171px;height:1px;background:#484848;"></div>
<div class="a" style="left:750px;top:493.65px;width:66.8px;height:9.95px;background:#4b4b4b;border-radius:1px"></div>
<div class="t" style="left:753px;top:496.06px;font-size:6px;color:#7a7a7a;font-weight:normal;">표준</div>
<svg style="left:809.5px;top:497.5px" width="5" height="3" viewBox="0 0 5 3"><path d="M0.5 0.5L2.5 2.5L4.5 0.5" stroke="#7a7a7a" stroke-width="0.9" fill="none"/></svg>
<div class="t" style="left:819.5px;top:496.06px;font-size:6px;color:#7a7a7a;font-weight:normal;">불투명도:</div>
<div class="a" style="left:846.6px;top:493.65px;width:22.6px;height:9.95px;background:#4b4b4b;border-radius:1px"></div>
<div class="t" style="left:849px;top:495.93px;font-size:6.3px;color:#6e6e6e;font-weight:normal;">100%</div>
<div class="a" style="left:869.6px;top:493.65px;width:8.4px;height:9.95px;background:#4b4b4b;border-radius:1px"></div>
<svg style="left:871.5px;top:497.5px" width="5" height="3" viewBox="0 0 5 3"><path d="M0.5 0.5L2.5 2.5L4.5 0.5" stroke="#7a7a7a" stroke-width="0.9" fill="none"/></svg>
<div class="a" style="left:747px;top:507.2px;width:171px;height:1.0px;background:#484848;"></div>
<div class="t" style="left:750px;top:513.66px;font-size:6px;color:#8a8a8a;font-weight:normal;">잠그기:</div>
<svg style="left:772.5px;top:512.5px" width="7" height="7" viewBox="0 0 7 7"><rect x="0.4" y="0.4" width="6.2" height="6.2" stroke="#bdbdbd" stroke-width="0.8" fill="none"/><rect x="1.3" y="1.3" width="2.2" height="2.2" fill="#bdbdbd"/><rect x="3.5" y="3.5" width="2.2" height="2.2" fill="#bdbdbd"/></svg>
<svg style="left:786px;top:512px" width="7" height="8" viewBox="0 0 7 8"><path d="M6.5 0.5L2.8 4.6" stroke="#bdbdbd" stroke-width="1.2"/><path d="M2.6 4.3C1.4 4.6 1 5.6 0.6 7.6 2.2 7.2 3.2 6.7 3.5 5.3z" fill="#bdbdbd"/></svg>
<svg style="left:798.5px;top:512px" width="8" height="8" viewBox="0 0 8 8"><path d="M4 0.8v6.4M0.8 4h6.4" stroke="#bdbdbd" stroke-width="0.8"/><path d="M4 0L3 1.2h2zM4 8L3 6.8h2zM0 4L1.2 3v2zM8 4L6.8 3v2z" fill="#bdbdbd"/></svg>
<svg style="left:812px;top:512px" width="8" height="8" viewBox="0 0 8 8"><rect x="1.5" y="1.5" width="5" height="5" stroke="#bdbdbd" stroke-width="0.8" fill="none"/><path d="M0 1.5h2M1.5 0v2M6 6.5h2M6.5 6v2" stroke="#bdbdbd" stroke-width="0.7"/></svg>
<svg style="left:826px;top:512px" width="7" height="8" viewBox="0 0 7 8"><rect x="0.5" y="3.5" width="6" height="4.5" fill="#bdbdbd"/><path d="M1.8 3.5V2.2a1.7 1.7 0 0 1 3.4 0v1.3" stroke="#bdbdbd" stroke-width="0.9" fill="none"/></svg>
<div class="t" style="left:837px;top:513.66px;font-size:6px;color:#8a8a8a;font-weight:normal;">칠:</div>
<div class="a" style="left:846.6px;top:511.5px;width:22.6px;height:9.8px;background:#4b4b4b;border-radius:1px"></div>
<div class="t" style="left:849px;top:513.53px;font-size:6.3px;color:#6e6e6e;font-weight:normal;">100%</div>
<div class="a" style="left:869.6px;top:511.5px;width:8.4px;height:9.8px;background:#4b4b4b;border-radius:1px"></div>
<svg style="left:871.5px;top:515.5px" width="5" height="3" viewBox="0 0 5 3"><path d="M0.5 0.5L2.5 2.5L4.5 0.5" stroke="#7a7a7a" stroke-width="0.9" fill="none"/></svg>
<div class="a" style="left:747px;top:525.8px;width:171px;height:24.8px;background:#535353;"></div>
<div class="a" style="left:766.2px;top:525.8px;width:142.7px;height:24.8px;background:#696969;"></div>
<svg style="left:752.5px;top:536.5px" width="8" height="5" viewBox="0 0 8 5"><path d="M0.3 2.5C1.6 0.6 2.8 0.2 4 0.2s2.4 0.4 3.7 2.3C6.4 4.4 5.2 4.8 4 4.8S1.6 4.4 0.3 2.5z" fill="#f2f2f2"/><circle cx="4" cy="2.5" r="1.1" fill="#535353"/></svg>
<div class="a" style="left:767.5px;top:528.9px;width:15.9px;height:19.3px;background:#ffffff;border:0.7px solid #3a3a3a"></div>
<div class="t" style="left:787.9px;top:536.36px;font-size:6px;color:#f4f4f4;font-weight:bold;">배경</div>
<svg style="left:892.5px;top:534.5px" width="6" height="8" viewBox="0 0 6 8"><rect x="0.5" y="3.2" width="5" height="4.3" stroke="#e6e6e6" stroke-width="0.8" fill="none"/><path d="M1.5 3.2V2a1.5 1.5 0 0 1 3 0v1.2" stroke="#e6e6e6" stroke-width="0.8" fill="none"/></svg>
<div class="a" style="left:747px;top:550.6px;width:171px;height:160.65px;background:#4b4b4b;"></div>
<div class="a" style="left:910px;top:550.6px;width:7.5px;height:160.4px;background:#4a4742;"></div>
<div class="a" style="left:747px;top:711.25px;width:171px;height:13.75px;background:#535353;"></div>
<div class="a" style="left:747px;top:710.3px;width:171px;height:1.0px;background:#464646;"></div>
<svg style="left:796px;top:714.5px" width="9" height="5" viewBox="0 0 9 5"><circle cx="2.3" cy="2.5" r="1.9" stroke="#8a8a8a" stroke-width="0.9" fill="none"/><circle cx="6.5" cy="2.5" r="1.9" stroke="#8a8a8a" stroke-width="0.9" fill="none"/></svg>
<div class="t" style="left:813.3px;top:713.86px;font-size:8.5px;color:#8e8e8e;font-weight:normal;font-family:"Liberation Serif",serif"><i>fx</i></div>
<svg style="left:829px;top:713.8px" width="8" height="7" viewBox="0 0 8 7"><rect x="0" y="0" width="8" height="7" rx="0.5" fill="#e8e8e8"/><circle cx="4" cy="3.5" r="1.8" fill="#535353"/></svg>
<svg style="left:846.3px;top:713.8px" width="7" height="7" viewBox="0 0 7 7"><circle cx="3.5" cy="3.5" r="3" stroke="#e8e8e8" stroke-width="0.9" fill="none"/><path d="M3.5 0.5A3 3 0 0 1 3.5 6.5z" fill="#e8e8e8" transform="rotate(45 3.5 3.5)"/></svg>
<div class="a" style="left:852.8px;top:720.6px;width:1.1px;height:1.1px;background:#e0e0e0;border-radius:50%"></div>
<svg style="left:862px;top:713.8px" width="8" height="7" viewBox="0 0 8 7"><path d="M0.3 1h3l0.8 0.9h3.6v4.8H0.3z" fill="#e8e8e8"/></svg>
<svg style="left:878.5px;top:713.8px" width="7" height="7" viewBox="0 0 7 7"><rect x="0.4" y="0.4" width="6.2" height="6.2" rx="0.5" stroke="#e8e8e8" stroke-width="0.8" fill="none"/><path d="M3.5 1.8v3.4M1.8 3.5h3.4" stroke="#e8e8e8" stroke-width="0.9"/></svg>
<svg style="left:894.5px;top:713.3px" width="7" height="8" viewBox="0 0 7 8"><path d="M0.5 1.5h6M2.5 1.5V0.5h2v1M1.2 1.5l0.5 6h3.6l0.5-6M2.6 3v3.5M4.4 3v3.5" stroke="#7a7a7a" stroke-width="0.7" fill="none"/></svg>
<svg style="left:729.5px;top:141.5px" width="10" height="11" viewBox="0 0 10 11"><rect x="0.4" y="0.4" width="2.6" height="2.6" stroke="#ddd" stroke-width="0.7" fill="none"/><rect x="0.4" y="4" width="2.6" height="2.6" stroke="#ddd" stroke-width="0.7" fill="none"/><rect x="0.4" y="7.6" width="2.6" height="2.6" fill="#ddd"/><path d="M4.8 1.3h3.4M5.3 1.3v3c1.9-0.2 3 0.8 3 2.3 0 1.6-1.3 2.7-3 3" stroke="#ddd" stroke-width="1" fill="none"/></svg>
<svg style="left:730.5px;top:160.2px" width="8" height="8" viewBox="0 0 8 8"><path d="M0.3 0.3h7.4v4.6H3.2L1.5 7.4V4.9H0.3z" fill="#e0e0e0"/></svg>
<div class="a" style="left:723px;top:175px;width:22.3px;height:1px;background:#474747;"></div>
<div class="a" style="left:451.9px;top:91px;width:112.3px;height:38.6px;background:#4a423e;border:1px solid #262220;border-radius:4px;box-shadow:0 1px 3px rgba(0,0,0,0.3)"></div>
<div class="t" style="left:466px;top:96.6px;font-size:6.6px;color:#f6f2ee;font-weight:bold;">플러그인 패널</div>
<div class="t" style="left:466px;top:108.1px;font-size:6.6px;color:#f6f2ee;font-weight:bold;">플러그인 찾아보기...</div>
<div class="t" style="left:466px;top:119.1px;font-size:6.6px;color:#f6f2ee;font-weight:bold;">플러그인 관리...</div>
<div class="a" style="left:361px;top:656.8px;width:122.6px;height:20.6px;background:#484848;border:1px solid #1f1f1f;border-radius:3px;box-shadow:0 1px 2px rgba(0,0,0,0.4)"></div>
<div class="a" style="left:363.9px;top:659.2px;width:1.9px;height:15.8px;background:#e8e8e8;border-radius:1px"></div>
<div class="a" style="left:369.8px;top:658.3px;width:66.9px;height:16.4px;background:#545454;border:0.8px solid #626262;border-radius:2px"></div>
<svg style="left:375.5px;top:662px" width="10" height="9" viewBox="0 0 10 9"><path d="M2 7.8H1.2C0.5 7.8 0.3 7 0.3 6.2 0.3 5 1 4.3 2 4.3 2.3 2.6 3.6 1.4 5.2 1.4c1.5 0 2.7 1 3 2.4" stroke="#e0e0e0" stroke-width="0.9" fill="none"/><circle cx="6.5" cy="6.3" r="2.4" stroke="#e0e0e0" stroke-width="0.9" fill="none"/><path d="M6.5 5v2.6M5.2 6.3h2.6" stroke="#e0e0e0" stroke-width="0.8"/></svg>
<div class="t" style="left:387.4px;top:663.95px;font-size:5.8px;color:#f0f0f0;font-weight:bold;">이미지 가져오기</div>
<div class="a" style="left:445.40000000000003px;top:666.1px;width:1.8px;height:1.8px;background:#e6e6e6;border-radius:50%"></div>
<div class="a" style="left:448.70000000000005px;top:666.1px;width:1.8px;height:1.8px;background:#e6e6e6;border-radius:50%"></div>
<div class="a" style="left:452.00000000000006px;top:666.1px;width:1.8px;height:1.8px;background:#e6e6e6;border-radius:50%"></div>
<div class="a" style="left:456.6px;top:673.6px;width:1.6px;height:1.6px;background:#dcdcdc;border-radius:50%"></div>
<svg style="left:467.5px;top:662px" width="10" height="10" viewBox="0 0 10 10"><path d="M0.5 2h9M0.5 5h9M0.5 8h9" stroke="#cfcfcf" stroke-width="0.8"/><circle cx="6" cy="2" r="1.2" fill="#484848" stroke="#cfcfcf" stroke-width="0.8"/><circle cx="3.5" cy="5" r="1.2" fill="#484848" stroke="#cfcfcf" stroke-width="0.8"/><circle cx="6.5" cy="8" r="1.2" fill="#484848" stroke="#cfcfcf" stroke-width="0.8"/></svg>
</body></html>
